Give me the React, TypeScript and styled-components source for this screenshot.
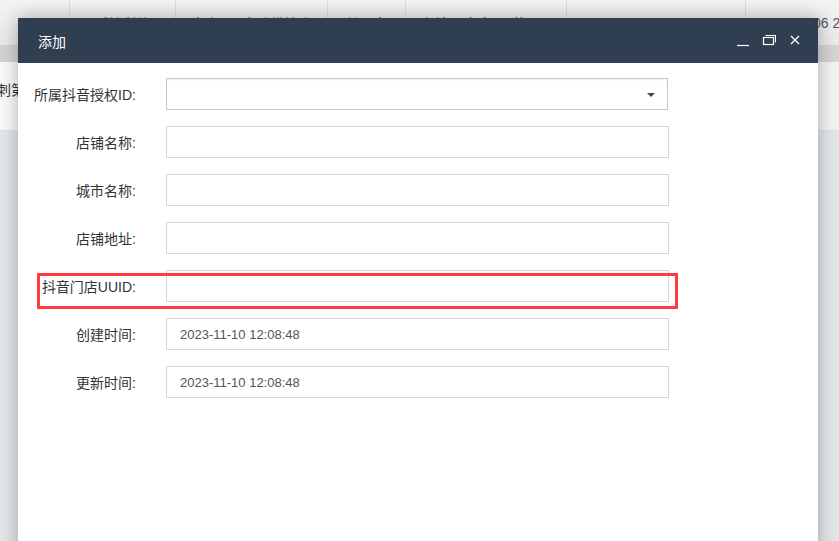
import styled, { createGlobalStyle } from "styled-components";

const GlobalStyle = createGlobalStyle`
  html, body {
    margin: 0;
    padding: 0;
    background: #e4e7ea;
  }
  body {
    font-family: "Liberation Sans", "Noto Sans CJK SC", sans-serif;
  }
`;

const tableCells = [
  { w: 70, text: "1" },
  { w: 106, text: "适地所约" },
  { w: 152, text: "高山24h自助烘焙店" },
  { w: 78, text: "长沙市" },
  { w: 161, text: "七婆公寓大厦2栋404" },
  { w: 179, text: "7075079915509999979" },
  { w: 120, text: "2023-11-06 20:21:16" },
];

const fields = [
  { label: "所属抖音授权ID:", kind: "select" },
  { label: "店铺名称:", kind: "input" },
  { label: "城市名称:", kind: "input" },
  { label: "店铺地址:", kind: "input" },
  { label: "抖音门店UUID:", kind: "input", marked: true },
  { label: "创建时间:", kind: "input", value: "2023-11-10 12:08:48" },
  { label: "更新时间:", kind: "input", value: "2023-11-10 12:08:48" },
];

export default function App() {
  return (
    <>
      <GlobalStyle />
      <S.Page>
        <S.TableRow>
          {tableCells.map((c, i) => (
            <S.Cell key={i} $w={c.w}>
              {c.text}
            </S.Cell>
          ))}
        </S.TableRow>
        <S.Band />
        <S.Toolbar>
          <S.ToolText>刺第</S.ToolText>
        </S.Toolbar>

        <S.Dialog>
          <S.Header>
            <S.Title>添加</S.Title>
            <S.Controls>
              <svg width="14" height="14" viewBox="0 0 14 14">
                <path d="M1 12.5h12" stroke="#fff" strokeWidth="1.2" />
              </svg>
              <svg width="14" height="14" viewBox="0 0 14 14">
                <rect x="1.5" y="4.5" width="10" height="7" fill="none" stroke="#fff" strokeWidth="1.2" />
                <path d="M3.5 2.5h10v7" fill="none" stroke="#fff" strokeWidth="1.2" />
              </svg>
              <svg width="14" height="14" viewBox="0 0 14 14">
                <path d="M3 3l8 8M11 3l-8 8" stroke="#fff" strokeWidth="1.3" />
              </svg>
            </S.Controls>
          </S.Header>
          <S.Body>
            {fields.map((f, i) => (
              <S.Row key={i}>
                <S.Label>{f.label}</S.Label>
                {f.kind === "select" ? (
                  <S.Select>
                    <S.Caret />
                  </S.Select>
                ) : (
                  <S.Input>{f.value}</S.Input>
                )}
                {f.marked && <S.Mark />}
              </S.Row>
            ))}
          </S.Body>
        </S.Dialog>
      </S.Page>
    </>
  );
}

const S = {
  Page: styled.div`
    position: relative;
    width: 839px;
    height: 541px;
    overflow: hidden;
    background: #e4e7ea;
  `,
  TableRow: styled.div`
    display: flex;
    height: 45px;
    background: linear-gradient(#f4f4f4, #e9e9e9);
  `,
  Cell: styled.div<{ $w: number }>`
    flex: 0 0 ${(p) => p.$w}px;
    display: flex;
    align-items: center;
    justify-content: center;
    border-right: 1px solid #dcdcdc;
    box-sizing: border-box;
    font-size: 14px;
    color: #555;
    white-space: nowrap;
    overflow: hidden;
    &:last-child {
      flex: 1 0 auto;
      justify-content: flex-start;
      padding-left: 12px;
      border-right: none;
    }
  `,
  Band: styled.div`
    height: 17px;
    background: #d4d4d4;
  `,
  Toolbar: styled.div`
    height: 68px;
    display: flex;
    align-items: center;
    background: linear-gradient(90deg, #fafafa, #f3f3f3);
    border-bottom: 1px solid #e0e0e0;
  `,
  ToolText: styled.span`
    margin-left: -3px;
    margin-top: -14px;
    font-size: 14px;
    color: #333;
  `,
  Dialog: styled.div`
    position: absolute;
    left: 18px;
    top: 18px;
    width: 800px;
    height: 560px;
    background: #fff;
    box-shadow: 0 0 18px rgba(0, 0, 0, 0.3);
  `,
  Header: styled.div`
    height: 45px;
    display: flex;
    align-items: center;
    justify-content: space-between;
    padding: 0 16px 0 20px;
    background: #2f3e50;
  `,
  Title: styled.div`
    color: #fff;
    font-size: 14px;
  `,
  Controls: styled.div`
    display: flex;
    gap: 12px;
    margin-top: -1px;
  `,
  Body: styled.div`
    display: flex;
    flex-direction: column;
    gap: 16px;
    padding-top: 15px;
  `,
  Row: styled.div`
    position: relative;
    display: grid;
    grid-template-columns: 118px 503px;
    column-gap: 30px;
    align-items: center;
    height: 32px;
  `,
  Label: styled.div`
    text-align: right;
    font-size: 14px;
    color: #333;
    white-space: nowrap;
  `,
  Input: styled.div`
    height: 32px;
    box-sizing: border-box;
    border: 1px solid #d2d6de;
    padding: 0 13px;
    display: flex;
    align-items: center;
    font-size: 13px;
    color: #555;
  `,
  Select: styled.div`
    position: relative;
    height: 32px;
    width: 502px;
    box-sizing: border-box;
    border: 1px solid #c8c8c8;
    box-shadow: inset 0 1px 2px rgba(0, 0, 0, 0.06);
  `,
  Caret: styled.span`
    position: absolute;
    right: 12px;
    top: 14px;
    border-left: 4px solid transparent;
    border-right: 4px solid transparent;
    border-top: 4px solid #444;
  `,
  Mark: styled.div`
    position: absolute;
    left: 19px;
    top: 3px;
    width: 641px;
    height: 36px;
    box-sizing: border-box;
    border: 3px solid #ff3b3f;
    pointer-events: none;
  `,
};
